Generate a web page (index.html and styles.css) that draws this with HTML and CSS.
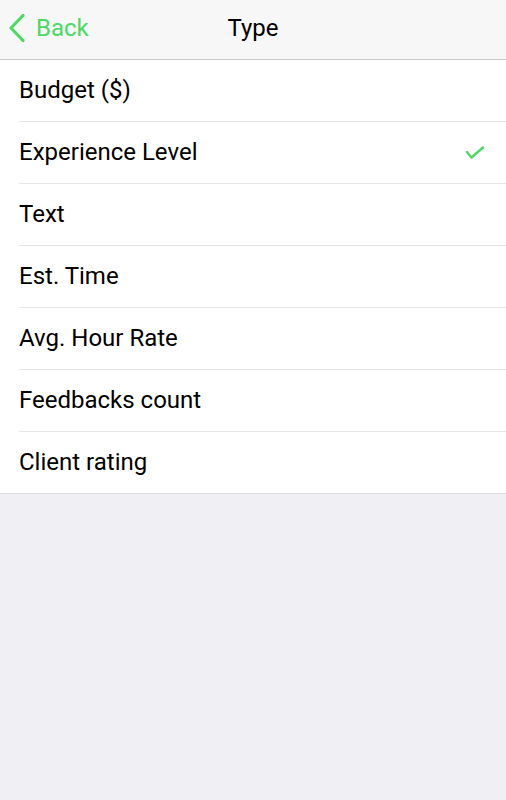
FILE: index.html
```html
<!DOCTYPE html>
<html lang="en">
<head>
  <meta charset="UTF-8">
  <meta name="viewport" content="width=device-width, initial-scale=1.0">
  <title>Type</title>
  <link rel="stylesheet" href="styles.css">
</head>
<body>
  <!-- 상단 네비게이션 -->
  <header class="nav-bar">
    <a class="back-link" href="#">
      <svg class="back-icon" width="18" height="30" viewBox="0 0 18 30">
        <polyline points="15,2.5 3,15 15,27.5" fill="none" stroke="#4cd964" stroke-width="3.2" stroke-linecap="round" stroke-linejoin="round"/>
      </svg>
      <span>Back</span>
    </a>
    <h1 class="nav-title">Type</h1>
  </header>

  <!-- 타입 목록 -->
  <ul class="type-list">
    <li class="type-item">Budget ($)</li>
    <li class="type-item selected">Experience Level
      <svg class="check-icon" width="20" height="16" viewBox="0 0 20 16">
        <polyline points="2,6 6.5,11.5 18,1.5" fill="none" stroke="#4cd964" stroke-width="2.4" stroke-linecap="round" stroke-linejoin="round"/>
      </svg>
    </li>
    <li class="type-item">Text</li>
    <li class="type-item">Est. Time</li>
    <li class="type-item">Avg. Hour Rate</li>
    <li class="type-item">Feedbacks count</li>
    <li class="type-item">Client rating</li>
  </ul>
</body>
</html>
```

FILE: styles.css
```css
/* 전체 바디 */
body {
  margin: 0;
  font-family: 'Roboto', 'Liberation Sans', sans-serif;
  background-color: #efeff4;
  color: #000;
}

.nav-bar {
  position: relative;
  display: flex;
  align-items: center;
  justify-content: center;
  height: 59px;
  background-color: #f7f7f7;
  border-bottom: 1px solid #c8c7cc;
}

.back-link {
  position: absolute;
  left: 8px;
  top: 13px;
  display: flex;
  align-items: center;
  gap: 10px;
  color: #4cd964;
  text-decoration: none;
  font-size: 24px;
}

.back-icon {
  display: block;
}

.nav-title {
  margin: 0 0 4px;
  font-size: 24px;
  font-weight: 400;
}

.type-list {
  list-style: none;
  margin: 0;
  padding: 0 0 0 19px;
  background-color: #fff;
  border-bottom: 1px solid #dcdce0;
}

.type-item {
  display: flex;
  align-items: center;
  justify-content: space-between;
  box-sizing: border-box;
  height: 62px;
  padding: 0 21px 2px 0;
  font-size: 24px;
  border-bottom: 1px solid #e5e5ea;
}

.type-item:last-child {
  height: 61px;
  border-bottom: none;
}

.check-icon {
  display: block;
  margin-top: 4px;
}
```
